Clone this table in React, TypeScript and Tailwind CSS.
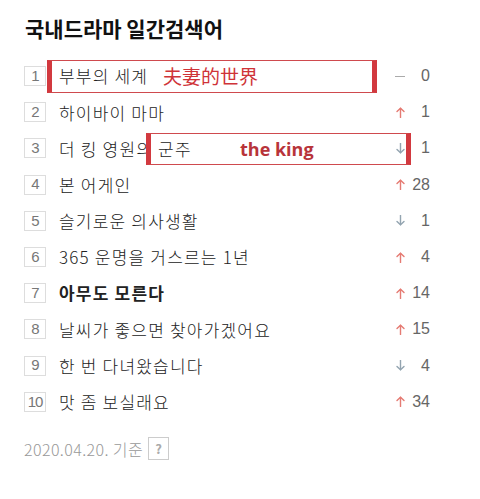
import React from "react";

type Trend = "up" | "down" | "same";

const ROWS: { rank: number; title: string; trend: Trend; diff: number; bold?: boolean }[] = [
  { rank: 1,  title: "부부의 세계",             trend: "same", diff: 0 },
  { rank: 2,  title: "하이바이 마마",           trend: "up",   diff: 1 },
  { rank: 3,  title: "더 킹 영원의 군주",       trend: "down", diff: 1 },
  { rank: 4,  title: "본 어게인",               trend: "up",   diff: 28 },
  { rank: 5,  title: "슬기로운 의사생활",       trend: "down", diff: 1 },
  { rank: 6,  title: "365 운명을 거스르는 1년", trend: "up",   diff: 4 },
  { rank: 7,  title: "아무도 모른다",           trend: "up",   diff: 14, bold: true },
  { rank: 8,  title: "날씨가 좋으면 찾아가겠어요", trend: "up", diff: 15 },
  { rank: 9,  title: "한 번 다녀왔습니다",      trend: "down", diff: 4 },
  { rank: 10, title: "맛 좀 보실래요",          trend: "up",   diff: 34 },
];

const KR = { fontFamily: '"Noto Sans CJK KR", "Noto Sans", sans-serif' };

function TrendMark({ trend }: { trend: Trend }) {
  if (trend === "same") {
    return <span className="block w-[10px] h-px bg-[#aaa]" />;
  }
  const up = trend === "up";
  return (
    <svg width="9" height="11" viewBox="0 0 9 11" fill="none"
      stroke={up ? "#e57b73" : "#93a4b0"} strokeWidth="1.4" strokeLinecap="round" strokeLinejoin="round">
      {up ? (
        <>
          <path d="M4.5 10.5V1.2" />
          <path d="M1 4.6L4.5 1.2L8 4.6" />
        </>
      ) : (
        <>
          <path d="M4.5 0.5V9.8" />
          <path d="M1 6.4L4.5 9.8L8 6.4" />
        </>
      )}
    </svg>
  );
}

export default function App() {
  return (
    <div className="relative w-[480px] h-[499px] bg-white overflow-hidden" style={KR}>
      {/* Title */}
      <div className="pl-[25px] pt-[14px]">
        <h1 className="text-[21px] leading-[28px] font-bold text-[#111]">국내드라마 일간검색어</h1>
      </div>

      {/* Ranking list */}
      <ul className="mt-[16px] ml-[24px] w-[406px]">
        {ROWS.map((r) => (
          <li key={r.rank} className="flex items-center h-[36.2px]">
            <span
              className="w-[22px] h-[20px] flex items-center justify-center border border-[#ddd] text-[15px] text-[#777] tracking-[-1px]"
              style={{ fontFamily: '"Liberation Sans", sans-serif' }}
            >
              {r.rank}
            </span>
            <span className={`ml-[13px] flex-1 text-[17px] tracking-[1.2px] text-[#222] ${r.bold ? "font-bold" : "font-light"}`}>{r.title}</span>
            <span className="w-[12px] flex items-center justify-center">
              <TrendMark trend={r.trend} />
            </span>
            <span
              className="w-[24px] text-right text-[16px] text-[#666]"
              style={{ fontFamily: '"Liberation Sans", sans-serif' }}
            >
              {r.diff}
            </span>
          </li>
        ))}
      </ul>

      {/* Footer */}
      <div className="mt-[17px] ml-[24px] flex items-center gap-[5px] h-[24px]">
        <span className="text-[16px] text-[#999] tracking-[0.4px] font-light">2020.04.20. 기준</span>
        <span className="w-[21px] h-[23px] border border-[#ccc] flex items-center justify-center text-[13px] font-bold text-[#aaa]">?</span>
      </div>

      {/* Annotation overlays */}
      <div className="absolute left-[47px] top-[60px] w-[330px] h-[33px] border border-[#cf4a4e] border-l-[5px] border-r-[5px] border-l-[#d2393f] border-r-[#d2393f] flex items-center pl-[111px]">
        <span className="text-[19px] text-[#cf3338]" style={{ fontFamily: '"Noto Sans CJK SC", sans-serif' }}>夫妻的世界</span>
      </div>
      <div className="absolute left-[146px] top-[133px] w-[265px] h-[32px] border border-[#cf4a4e] border-l-[5px] border-r-[5px] border-l-[#d2393f] border-r-[#d2393f] flex items-center pl-[89px]">
        <span className="text-[18px] font-bold text-[#b8343a]" style={{ fontFamily: '"Open Sans", sans-serif' }}>the king</span>
      </div>
    </div>
  );
}
